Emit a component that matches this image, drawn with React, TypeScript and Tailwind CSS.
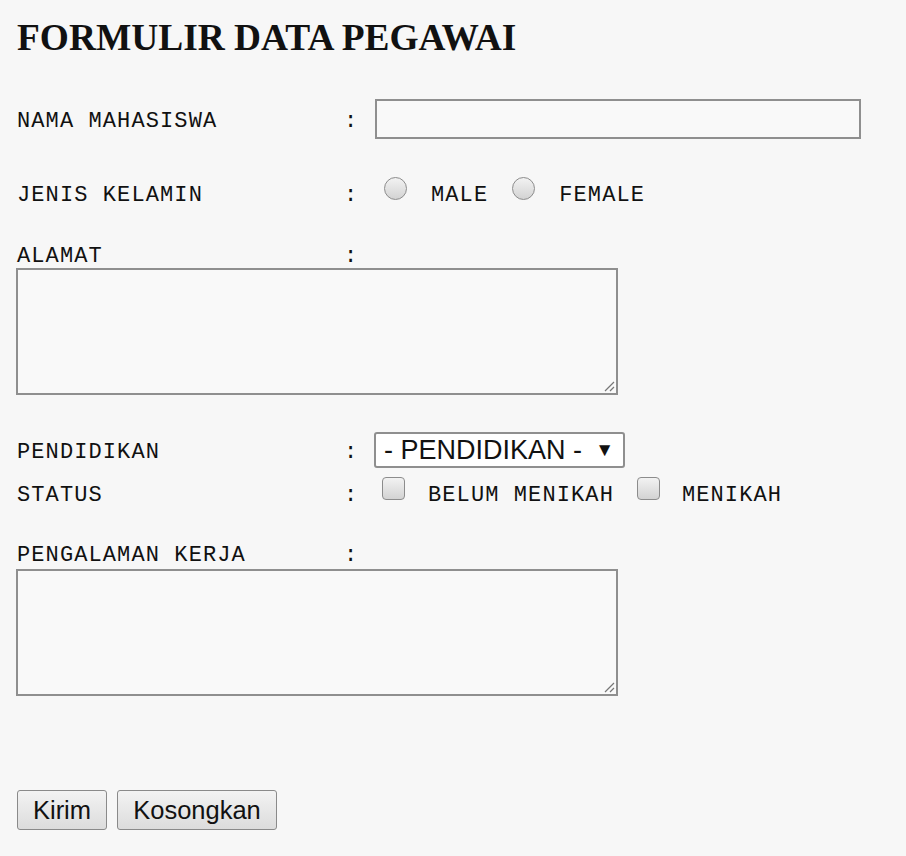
import React from 'react';

const monoBase = "font-['Liberation_Mono',monospace] text-[22px] tracking-[1.1px] text-[#111]";
const mono = `${monoBase} pt-[4px]`;

const Label = ({ text, block }: { text: string; block?: boolean }) => {
  const cls = block ? monoBase : mono;
  return (
    <div className="flex items-center">
      <span className={`${cls} w-[328px] whitespace-pre pl-[1px]`}>{text}</span>
      <span className={`${cls} w-[14px]`}>:</span>
    </div>
  );
};

const Radio = ({ name }: { name: string }) => (
  <input
    type="radio"
    name={name}
    className="appearance-none w-[23px] h-[23px] rounded-full border border-[#8c8c8c] bg-gradient-to-b from-[#f2f2f2] to-[#d3d3d3] mb-[10px]"
  />
);

const Check = () => (
  <input
    type="checkbox"
    className="appearance-none w-[23px] h-[23px] rounded-[4px] border border-[#8c8c8c] bg-gradient-to-b from-[#f2f2f2] to-[#d3d3d3] mb-[10px]"
  />
);

const Resizer = () => (
  <svg className="absolute right-[3px] bottom-[3px]" width="12" height="12" viewBox="0 0 12 12">
    <path d="M11 2 L2 11 M11 7 L7 11" stroke="#777" strokeWidth="1.2" />
  </svg>
);

const Area = () => (
  <div className="relative w-[602px] h-[127px]">
    <textarea className="block w-full h-full resize-none border-2 border-[#8f8f8f] bg-[#f9f9f9] outline-none" />
    <Resizer />
  </div>
);

const App: React.FC = () => {
  return (
    <div className="w-[906px] h-[856px] bg-[#f7f7f7] pl-[16px] pt-[18px] overflow-hidden">
      {/* Title */}
      <h1 className="font-['Liberation_Serif',serif] font-bold text-[37.4px] leading-[40px] text-[#111] pl-[1px]">
        FORMULIR DATA PEGAWAI
      </h1>

      {/* Nama */}
      <div className="flex items-center h-[40px] mt-[41px]">
        <Label text="NAMA MAHASISWA" />
        <input
          type="text"
          className="ml-[17px] w-[486px] h-[40px] border-2 border-[#8f8f8f] bg-[#f9f9f9] outline-none"
        />
      </div>

      {/* Jenis kelamin */}
      <div className="flex items-center h-[32px] mt-[38px]">
        <Label text="JENIS KELAMIN" />
        <div className="flex items-center ml-[26px]">
          <Radio name="jk" />
          <span className={`${mono} ml-[24px]`}>MALE</span>
          <div className="ml-[24px] flex items-center">
            <Radio name="jk" />
          </div>
          <span className={`${mono} ml-[24px]`}>FEMALE</span>
        </div>
      </div>

      {/* Alamat */}
      <div className="h-[28px] mt-[31px]">
        <Label text="ALAMAT" block />
      </div>
      <Area />

      {/* Pendidikan */}
      <div className="flex items-center h-[36px] mt-[37px]">
        <Label text="PENDIDIKAN" />
        <div className="relative ml-[16px]">
          <select className="appearance-none w-[251px] h-[36px] border-2 border-[#8f8f8f] rounded-[3px] bg-white pl-[8px] font-['Liberation_Sans',Arial,sans-serif] text-[27px] leading-[32px] text-[#111] outline-none">
            <option>- PENDIDIKAN -</option>
            <option>SD</option>
            <option>SMP</option>
            <option>SMA</option>
            <option>S1</option>
          </select>
          <span className="absolute right-[11px] top-[5px] text-[19px] leading-[24px] text-[#111] pointer-events-none">▼</span>
        </div>
      </div>

      {/* Status */}
      <div className="flex items-center h-[28px] mt-[11px]">
        <Label text="STATUS" />
        <div className="flex items-center ml-[24px]">
          <Check />
          <span className={`${mono} ml-[23px]`}>BELUM MENIKAH</span>
          <div className="ml-[23px] flex items-center">
            <Check />
          </div>
          <span className={`${mono} ml-[22px]`}>MENIKAH</span>
        </div>
      </div>

      {/* Pengalaman kerja */}
      <div className="h-[28px] mt-[32px] mb-[2px]">
        <Label text="PENGALAMAN KERJA" block />
      </div>
      <Area />

      {/* Buttons */}
      <div className="flex gap-[10px] mt-[94px] pl-[1px]">
        <button className="h-[40px] w-[90px] border border-[#8a8a8a] rounded-[3px] bg-gradient-to-b from-[#f3f3f3] to-[#dcdcdc] font-['Liberation_Sans',Arial,sans-serif] text-[25.5px] text-[#111]">
          Kirim
        </button>
        <button className="h-[40px] w-[160px] border border-[#8a8a8a] rounded-[3px] bg-gradient-to-b from-[#f3f3f3] to-[#dcdcdc] font-['Liberation_Sans',Arial,sans-serif] text-[25.5px] text-[#111]">
          Kosongkan
        </button>
      </div>
    </div>
  );
};

export default App;
